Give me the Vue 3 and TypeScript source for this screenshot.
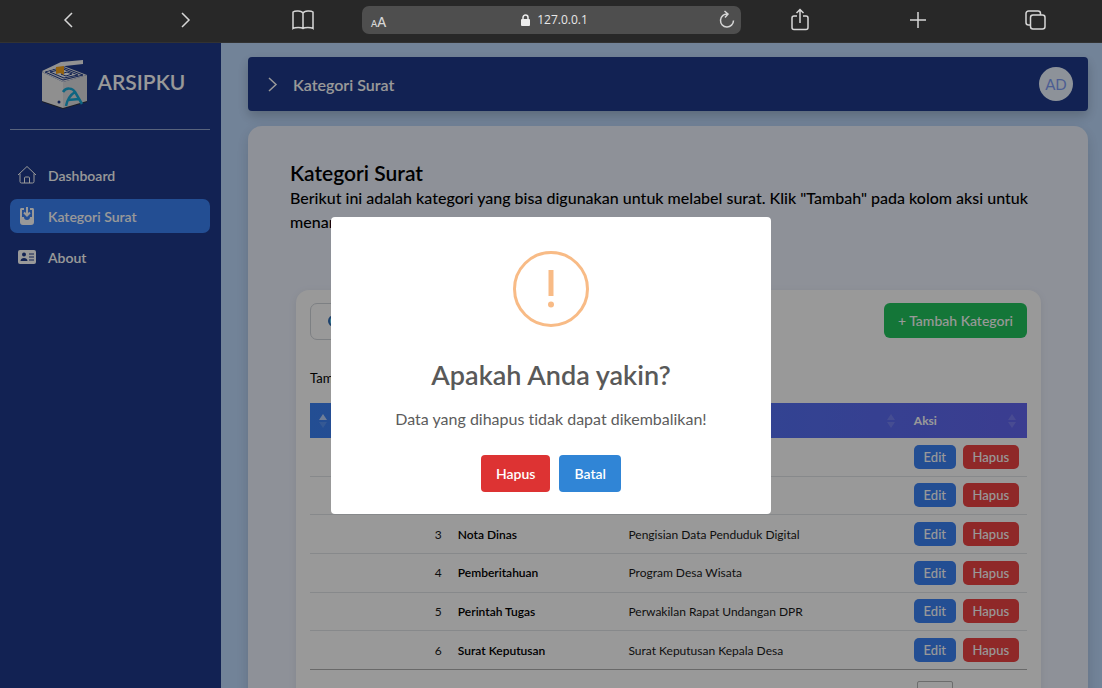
<script setup lang="ts">
import { ref } from 'vue'

interface Category {
  id: number
  name: string
  description: string
}

const categories: Category[] = [
  { id: 1, name: 'Undangan', description: 'Undangan Rapat' },
  { id: 2, name: 'Pengumuman', description: 'Pengumuman Desa' },
  { id: 3, name: 'Nota Dinas', description: 'Pengisian Data Penduduk Digital' },
  { id: 4, name: 'Pemberitahuan', description: 'Program Desa Wisata' },
  { id: 5, name: 'Perintah Tugas', description: 'Perwakilan Rapat Undangan DPR' },
  { id: 6, name: 'Surat Keputusan', description: 'Surat Keputusan Kepala Desa' },
]

const confirming = ref(true)
</script>

<template>
  <div class="screen">
    <header class="browser">
      <button class="tool" aria-label="Back">
        <svg width="24" height="24" viewBox="0 0 24 24"><path d="M15 5 8 12l7 7" /></svg>
      </button>
      <button class="tool" aria-label="Forward">
        <svg width="24" height="24" viewBox="0 0 24 24"><path d="m9 5 7 7-7 7" /></svg>
      </button>
      <button class="tool" aria-label="Bookmarks">
        <svg width="24" height="24" viewBox="0 0 24 24">
          <path d="M12 5C10.500 2.500 4 2.500 2 4V20.500C4 19 10.500 19 12 20.500C13.500 19 20 19 22 20.500V4C20 2.500 13.500 2.500 12 5ZM12 5V20.500" />
        </svg>
      </button>
      <div class="address">
        <span class="reader"><small>A</small>A</span>
        <span class="host">
          <svg class="lock" width="9" height="12" viewBox="0 0 9 12">
            <rect x="0" y="5" width="9" height="7" rx="1" />
            <path d="M2 6V3.500a2.500 2.500 0 0 1 5 0V6" />
          </svg>
          127.0.0.1
        </span>
        <button class="reload" aria-label="Reload">
          <svg width="18" height="20" viewBox="0 0 18 20">
            <path d="M9.500 4A6.500 6.500 0 1 0 15.500 10.500M6.500 1 10 4 7 7.500" />
          </svg>
        </button>
      </div>
      <button class="tool" aria-label="Share">
        <svg width="24" height="24" viewBox="0 0 24 24">
          <path d="M9 8H6a2 2 0 0 0-2 2v9.500a2 2 0 0 0 2 2h12a2 2 0 0 0 2-2V10a2 2 0 0 0-2-2h-3M12 15V2M8.500 5 12 1.500 15.500 5" />
        </svg>
      </button>
      <button class="tool" aria-label="New tab">
        <svg width="24" height="24" viewBox="0 0 24 24"><path d="M12 4v16M4 12h16" /></svg>
      </button>
      <button class="tool" aria-label="Tabs">
        <svg width="24" height="24" viewBox="0 0 24 24">
          <rect x="6.500" y="7" width="14.500" height="14" rx="2.500" />
          <path d="M6.500 17H4.500A2.500 2.500 0 0 1 2 14.500V5.500A2.500 2.500 0 0 1 4.500 3H14A2.500 2.500 0 0 1 16.500 5.500V7" />
        </svg>
      </button>
    </header>

    <div class="app">
      <aside class="sidebar">
        <div class="brand">
          <svg width="48" height="50" viewBox="0 0 48 50">
            <path d="M1 42 22 49 46 42V40L22 47 1 41Z" fill="#30323c" />
            <path d="M1 12 22 22V48L1 41Z" fill="#efefef" />
            <path d="M22 22 46 15V41L22 48Z" fill="#dcdcdf" />
            <path d="M1 12 20 5 46 15 22 22Z" fill="#e3e4ea" />
            <path d="M4 12 21 7 42 15 22 20Z" fill="none" stroke="#1e3a8a" />
            <path d="M9 12 22 9 37 15 23 18Z" fill="#f5f5f5" stroke="#1e3a8a" />
            <path d="M20 14 26 12 31 14 25 16Z" fill="#fff" stroke="#1e3a8a" />
            <path d="M1 11 20 2 42 0V4L24 6 2 12Z" fill="#f4f4f4" />
            <path d="M15 7 23 6V15L19 13 15 14Z" fill="#f7a51c" />
            <path d="M22 32C25 27 32 28 34 32L41 44M34 32C29 35 26 41 25 46M27 40 38 39" fill="none" stroke="#18a8d8" stroke-width="2.500" />
            <circle cx="18" cy="42" r="1.500" fill="#1e3a8a" />
          </svg>
          <span>ARSIPKU</span>
        </div>
        <nav class="menu">
          <a href="#dashboard">
            <svg width="20" height="20" viewBox="0 0 20 20">
              <path class="line" d="M1 10 10 1.500 19 10M3 8.500V16.500A1.500 1.500 0 0 0 4.500 18H15.500A1.500 1.500 0 0 0 17 16.500V8.500M7.500 18V13A1 1 0 0 1 8.500 12H11.500A1 1 0 0 1 12.500 13V18" />
            </svg>
            Dashboard
          </a>
          <a href="#kategori" class="active">
            <svg width="20" height="20" viewBox="0 0 20 20">
              <path d="M4 2H7V4H5V11H7A3 3 0 0 0 13 11H15V4H13V2H16A2 2 0 0 1 17 4V16A3 3 0 0 1 14 19H6A3 3 0 0 1 3 16V4A2 2 0 0 1 4 2Z" />
              <path class="arrow" d="M10 1V9M7 6.500 10 9.500 13 6.500" />
            </svg>
            Kategori Surat
          </a>
          <a href="#about">
            <svg width="20" height="20" viewBox="0 0 20 20">
              <rect x="1" y="3" width="18" height="14" rx="2" />
              <circle class="cut" cx="7" cy="7.500" r="2" />
              <path class="cut" d="M3.500 14C3.500 10 10.500 10 10.500 14Z" />
              <path class="slot" d="M12 7h5M12 10h5M12 13h5" />
            </svg>
            About
          </a>
        </nav>
      </aside>

      <main class="main">
        <div class="topbar">
          <svg width="12" height="16" viewBox="0 0 12 16"><path d="m2 2 7 6.500-7 6.500" /></svg>
          <span>Kategori Surat</span>
          <button class="avatar">AD</button>
        </div>

        <section class="panel">
          <h1>Kategori Surat</h1>
          <p class="intro">
            Berikut ini adalah kategori yang bisa digunakan untuk melabel surat. Klik "Tambah" pada
            kolom aksi untuk menambahkan kategori pada surat.
          </p>

          <div class="card">
            <div class="actions">
              <label class="search">
                <svg width="14" height="14" viewBox="0 0 14 14">
                  <circle cx="6" cy="6" r="5" /><path d="m10 10 3 3" />
                </svg>
                <input type="search" aria-label="Cari kategori" />
              </label>
              <button class="add">+ Tambah Kategori</button>
            </div>
            <div class="length">Tampilkan</div>
            <table>
              <colgroup><col class="c-no" /><col class="c-name" /><col class="c-desc" /><col /></colgroup>
              <thead>
                <tr>
                  <th class="num sorted">
                    <div><svg width="8" height="14" viewBox="0 0 8 14"><path d="M0 6 4 0 8 6Z" /><path d="M0 8 4 14 8 8Z" /></svg><span>No</span></div>
                  </th>
                  <th v-for="label in ['Nama', 'Keterangan', 'Aksi']" :key="label">
                    <div><span>{{ label }}</span><svg width="8" height="14" viewBox="0 0 8 14"><path d="M0 6 4 0 8 6Z" /><path d="M0 8 4 14 8 8Z" /></svg></div>
                  </th>
                </tr>
              </thead>
              <tbody>
                <tr v-for="row in categories" :key="row.id">
                  <td class="num">{{ row.id }}</td>
                  <td class="name">{{ row.name }}</td>
                  <td>{{ row.description }}</td>
                  <td>
                    <div class="row-actions">
                      <button class="edit">Edit</button>
                      <button class="delete" @click="confirming = true">Hapus</button>
                    </div>
                  </td>
                </tr>
              </tbody>
            </table>
            <div class="pages"><button>1</button></div>
          </div>
        </section>
      </main>

      <div v-if="confirming" class="overlay">
        <div class="dialog" role="dialog" aria-modal="true" aria-labelledby="confirm-title">
          <svg class="warn" width="76" height="76" viewBox="0 0 76 76">
            <circle cx="38" cy="38" r="36.500" />
            <path d="M35.500 19H40.500V45H35.500Z" />
            <circle class="dot" cx="38" cy="53.500" r="3" />
          </svg>
          <h2 id="confirm-title">Apakah Anda yakin?</h2>
          <p>Data yang dihapus tidak dapat dikembalikan!</p>
          <div class="choices">
            <button class="yes" @click="confirming = false">Hapus</button>
            <button class="no" @click="confirming = false">Batal</button>
          </div>
        </div>
      </div>
    </div>
  </div>
</template>

<style>
body {
  margin: 0;
}
</style>

<style scoped>
* {
  box-sizing: border-box;
}
button {
  font: inherit;
  border: 0;
  padding: 0;
  background: none;
  color: inherit;
  cursor: pointer;
}
svg {
  flex: none;
}
.screen {
  display: flex;
  flex-direction: column;
  height: 100vh;
  overflow: hidden;
  font-family: Lato, "Liberation Sans", sans-serif;
  font-variant-ligatures: none;
  color: #000;
}

.browser {
  flex: none;
  display: grid;
  grid-template-columns: 126fr 118fr 118fr 379fr 118fr 118fr 117fr 8fr;
  align-items: center;
  height: 43px;
  padding-bottom: 3px;
  background: #282828;
  border-bottom: 1px solid #323232;
  color: #d6d6d6;
}
.tool {
  display: grid;
  place-items: center;
}
.tool:first-child {
  padding-left: 11px;
}
.tool svg,
.reload svg {
  fill: none;
  stroke: currentColor;
  stroke-width: 1.500;
}
.address {
  display: grid;
  grid-template-columns: 1fr auto 1fr;
  align-items: center;
  height: 28px;
  padding: 0 5px 0 9px;
  border-radius: 7px;
  background: #4e4e4e;
}
.reader {
  padding-top: 5px;
  font-size: 13px;
  font-weight: 600;
}
.reader small {
  font-size: 9px;
}
.host {
  display: flex;
  align-items: center;
  gap: 7px;
  padding-left: 2px;
  font-size: 12px;
  font-weight: 500;
  font-family: "Open Sans", sans-serif;
  color: #e8e8e8;
}
.lock rect {
  fill: #ececec;
}
.lock path {
  fill: none;
  stroke: #ececec;
  stroke-width: 1.500;
}
.reload {
  justify-self: end;
  display: grid;
}

.app {
  position: relative;
  flex: 1;
  min-height: 0;
  display: flex;
  overflow: hidden;
  background: #bfdbfe;
}
.sidebar {
  flex: none;
  width: 221px;
  padding: 14px 11px 14px 10px;
  background: #1e3a8a;
  color: #fff;
}
.brand {
  display: flex;
  align-items: flex-start;
  justify-content: center;
  gap: 9px;
  height: 73px;
  padding: 3px 0 0 6px;
  border-bottom: 1px solid #93a5cf;
  font-size: 21px;
  font-weight: 600;
  line-height: 44px;
}
.menu {
  display: flex;
  flex-direction: column;
  gap: 7px;
  padding-top: 28px;
}
.menu a {
  display: flex;
  align-items: center;
  gap: 11px;
  height: 34px;
  padding: 0 7px;
  border-radius: 7px;
  font-size: 14px;
  font-weight: 600;
  color: inherit;
  text-decoration: none;
}
.menu a.active {
  background: #3b82f6;
}
.menu svg {
  fill: #fff;
}
.menu .line,
.menu .arrow {
  fill: none;
  stroke: #fff;
}
.menu .arrow {
  stroke-width: 2;
}
.menu .cut {
  fill: #1e3a8a;
}
.menu .slot {
  stroke: #1e3a8a;
}

.main {
  flex: 1;
  min-width: 0;
  padding: 14px 14px 0 27px;
}
.topbar {
  display: flex;
  align-items: center;
  gap: 14px;
  height: 54px;
  padding: 0 15px 0 19px;
  border-radius: 4px;
  background: #1e3a8a;
  color: #fff;
  font-size: 16px;
  font-weight: 600;
  box-shadow: 0 5px 12px rgba(0, 0, 0, 0.2);
}
.topbar svg {
  fill: none;
  stroke: #fff;
  stroke-width: 1.500;
}
.avatar {
  width: 34px;
  height: 34px;
  margin-left: auto;
  border-radius: 50%;
  background: #ebf4ff;
  color: #7f9cf5;
  font-size: 15px;
  font-weight: 400;
}
.panel {
  margin-top: 15px;
  height: 700px;
  padding: 34px 42px;
  border-radius: 14px;
  background: #edf2fe;
  box-shadow: 0 5px 14px rgba(0, 0, 0, 0.14);
}
h1 {
  margin: 0;
  font-size: 21px;
  font-weight: 600;
  line-height: 26px;
}
.intro {
  margin: 0;
  font-size: 16px;
  font-weight: 500;
  line-height: 24px;
}
.card {
  margin: 56px 5px 0 6px;
  padding: 13px 14px;
  border-radius: 13px;
  background: #fff;
  box-shadow: 0 2px 8px rgba(0, 0, 0, 0.08);
}
.actions {
  display: flex;
  justify-content: space-between;
}
.search {
  display: flex;
  align-items: center;
  width: 250px;
  height: 37px;
  padding: 0 17px;
  border: 1px solid #d1d5db;
  border-radius: 7px;
}
.search svg {
  fill: #67d5f5;
  stroke: #2f6db5;
  stroke-width: 2;
}
.search input {
  flex: 1;
  min-width: 0;
  border: 0;
  background: none;
}
.add {
  height: 35px;
  padding: 0 14px;
  border-radius: 6px;
  background: #22c55e;
  color: #fff;
  font-size: 14px;
  font-weight: 500;
}
.length {
  margin: 28px 0 15px;
  font-size: 13px;
  line-height: 20px;
}
table {
  width: 100%;
  height: 267px;
  table-layout: fixed;
  border-collapse: separate;
  border-spacing: 0;
  font-size: 12px;
}
.c-no {
  width: 19.500%;
}
.c-name {
  width: 23.800%;
}
.c-desc {
  width: 39.800%;
}
thead tr {
  height: 35px;
  background: linear-gradient(90deg, #3b82f6, #6366f1);
}
th {
  padding: 0 11px 0 8px;
  color: #fff;
  text-align: left;
  font-weight: 700;
}
th.num {
  padding: 0 8px 0 9px;
}
th div {
  display: flex;
  align-items: center;
  justify-content: space-between;
}
th svg {
  fill: #fff;
  opacity: 0.15;
}
th.sorted svg {
  opacity: 1;
}
th.sorted path:first-child {
  opacity: 0.65;
}
th.sorted path:last-child {
  opacity: 0.15;
}
td {
  padding: 0 8px;
  border-bottom: 1px solid #e2e4e8;
  color: #1a1a1a;
}
tr:last-child td {
  border-bottom-color: #b0b0b0;
}
.num {
  text-align: right;
}
.name {
  font-weight: 600;
  color: #000;
}
.row-actions {
  display: flex;
  gap: 7px;
}
.row-actions button {
  height: 24px;
  border-radius: 5px;
  color: #fff;
  font-size: 13px;
  font-weight: 500;
}
.row-actions .edit {
  width: 42px;
  background: #3b82f6;
}
.row-actions .delete {
  width: 56px;
  background: #ef4444;
}
.pages {
  display: flex;
  justify-content: flex-end;
  padding: 11px 74px 0 0;
}
.pages button {
  width: 36px;
  height: 36px;
  border: 1px solid #b5b5b5;
  border-radius: 2px;
  font-size: 13px;
}

.overlay {
  position: absolute;
  inset: 0;
  display: grid;
  place-items: center;
  background: rgba(0, 0, 0, 0.4);
}
.dialog {
  display: flex;
  flex-direction: column;
  align-items: center;
  width: 440px;
  padding: 34px 20px 22px;
  border-radius: 4px;
  background: #fff;
}
.warn {
  fill: #f8bb86;
}
.warn circle:first-child {
  fill: none;
  stroke: #f8bb86;
  stroke-width: 3;
}
h2 {
  margin: 31px 0 0;
  font-size: 27px;
  font-weight: 600;
  line-height: 34px;
  color: #595959;
}
.dialog p {
  margin: 16px 0 0;
  font-size: 16px;
  line-height: 22px;
  color: #5c5c5c;
}
.choices {
  display: flex;
  gap: 9px;
  margin-top: 25px;
}
.choices button {
  height: 37px;
  padding: 0 15px;
  border-radius: 4px;
  color: #fff;
  font-size: 14px;
  font-weight: 600;
}
.choices .yes {
  background: #dd3333;
}
.choices .no {
  background: #3085d6;
}
</style>
